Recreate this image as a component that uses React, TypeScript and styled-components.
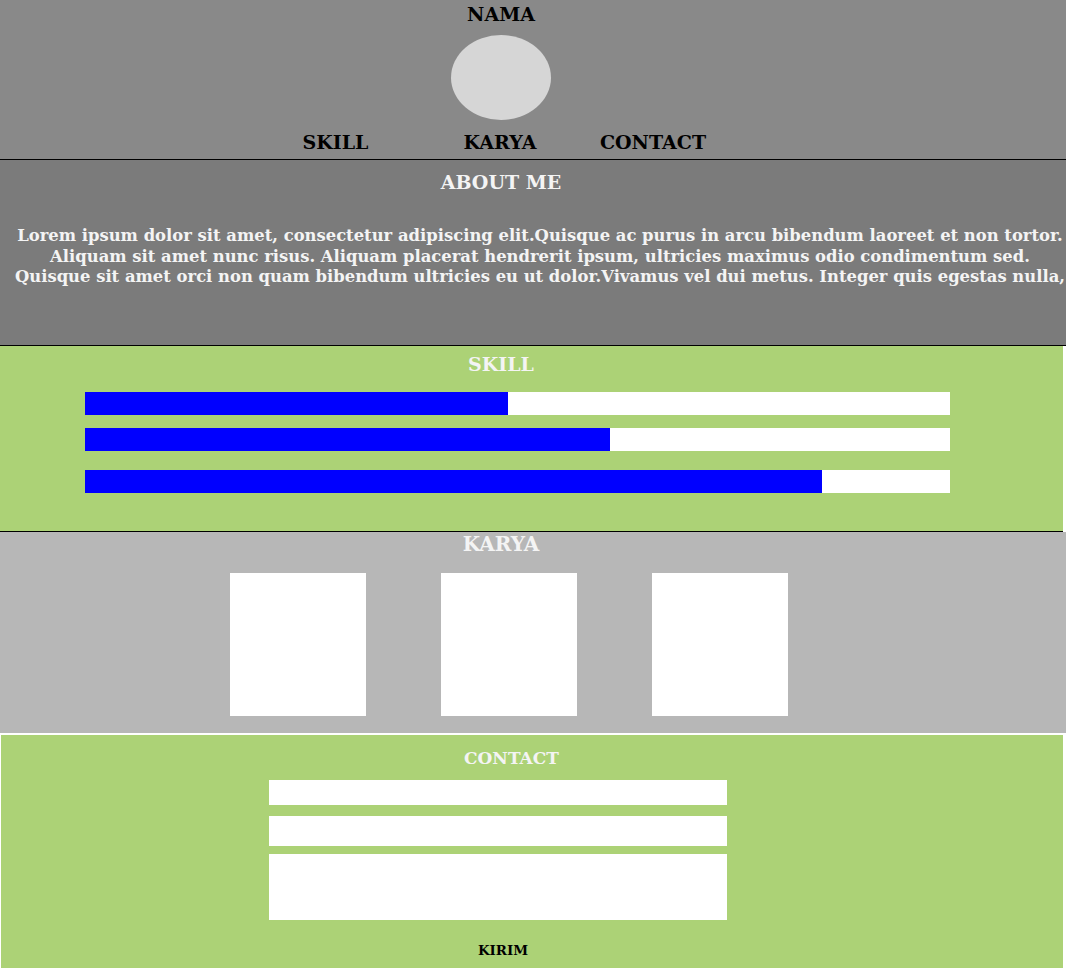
import React from "react";
import styled, { createGlobalStyle } from "styled-components";

const Global = createGlobalStyle`
  html, body { margin: 0; padding: 0; background: #ffffff; }
  body { font-family: "DejaVu Serif", "Liberation Serif", serif; font-weight: bold; }
  * { box-sizing: border-box; }
`;

const Page = styled.div`
  width: 1066px;
  display: flex;
  flex-direction: column;
`;

const Header = styled.header`
  height: 159px;
  background: #898989;
  border-bottom: 1px solid #000;
  display: flex;
  flex-direction: column;
  align-items: center;
  width: 1002px;
  box-sizing: content-box;
  padding-right: 64px;
`;

const Name = styled.h1`
  margin: 0;
  font-size: 19px;
  line-height: 28px;
  color: #000;
`;

const Avatar = styled.div`
  width: 100px;
  height: 85px;
  margin-top: 7px;
  border-radius: 50%;
  background: #d6d6d6;
`;

const Nav = styled.nav`
  align-self: stretch;
  margin-top: 10px;
  padding-left: 255px;
  display: grid;
  grid-template-columns: 161px 168px 138px;
`;

const NavLink = styled.a`
  text-align: center;
  font-size: 19px;
  line-height: 24px;
  color: #000;
  text-decoration: none;
  white-space: nowrap;
`;

const Section = styled.section<{ $bg: string; $h: number; $w?: number; $line?: boolean }>`
  background: ${(p) => p.$bg};
  height: ${(p) => p.$h}px;
  width: ${(p) => p.$w ?? 1066}px;
  border-bottom: ${(p) => (p.$line ? "1px solid #000" : "none")};
  box-sizing: content-box;
  overflow: hidden;
  display: flex;
  flex-direction: column;
`;

const Title = styled.h2<{ $w?: number; $top?: number; $size?: number }>`
  margin: 0;
  padding-top: ${(p) => p.$top ?? 0}px;
  width: ${(p) => p.$w ?? 1002}px;
  text-align: center;
  font-size: ${(p) => p.$size ?? 19}px;
  line-height: 24px;
  color: #f4f4f4;
`;

const About = styled.p`
  margin: 32px 0 0;
  padding-left: 14px;
  width: 1066px;
  text-align: center;
  font-size: 16.4px;
  line-height: 20.7px;
  color: #f4f4f4;
  white-space: nowrap;
`;

const Bars = styled.div`
  margin: 16px 0 0 85px;
  display: flex;
  flex-direction: column;
`;

const Track = styled.div<{ $gap: number }>`
  width: 865px;
  height: 23px;
  background: #ffffff;
  margin-bottom: ${(p) => p.$gap}px;
`;

const Fill = styled.div`
  height: 23px;
  background: #0000ff;
`;

const Works = styled.div`
  margin-top: 17px;
  padding-left: 230px;
  display: flex;
  gap: 75px;
`;

const Work = styled.div`
  width: 136px;
  height: 143px;
  background: #ffffff;
`;

const ContactWrap = styled.div`
  margin-top: 2px;
  padding-left: 1px;
`;

const Form = styled.form`
  margin-top: 10px;
  padding-left: 268px;
  display: flex;
  flex-direction: column;
  align-items: flex-start;
`;

const Field = styled.input<{ $h: number; $gap: number }>`
  width: 458px;
  height: ${(p) => p.$h}px;
  margin: 0 0 ${(p) => p.$gap}px;
  border: none;
  background: #fff;
  padding: 0 4px;
  outline: none;
`;

const Area = styled.textarea`
  width: 458px;
  height: 66px;
  margin: 0;
  border: none;
  background: #fff;
  resize: none;
  outline: none;
`;

const Send = styled.button`
  margin: 21px 0 0;
  width: 468px;
  padding: 0;
  border: none;
  background: none;
  font-family: "DejaVu Serif", "Liberation Serif", serif;
  font-weight: bold;
  font-size: 13.4px;
  line-height: 18px;
  color: #000;
  text-align: center;
`;

const skills = [
  { pct: 48.9, gap: 13 },
  { pct: 60.7, gap: 19 },
  { pct: 85.2, gap: 0 },
];

export default function App() {
  return (
    <Page>
      <Global />
      <Header>
        <Name>NAMA</Name>
        <Avatar />
        <Nav>
          <NavLink href="#skill">SKILL</NavLink>
          <NavLink href="#karya">KARYA</NavLink>
          <NavLink href="#contact">CONTACT</NavLink>
        </Nav>
      </Header>

      <Section $bg="#7b7b7b" $h={185} $line>
        <Title $top={10}>ABOUT ME</Title>
        <About>
          Lorem ipsum dolor sit amet, consectetur adipiscing elit.Quisque ac purus in arcu bibendum laoreet et non tortor.
          <br />
          Aliquam sit amet nunc risus. Aliquam placerat hendrerit ipsum, ultricies maximus odio condimentum sed.
          <br />
          Quisque sit amet orci non quam bibendum ultricies eu ut dolor.Vivamus vel dui metus. Integer quis egestas nulla,
        </About>
      </Section>

      <Section id="skill" $bg="#acd276" $h={185} $w={1063} $line>
        <Title $top={6}>SKILL</Title>
        <Bars>
          {skills.map((s, i) => (
            <Track key={i} $gap={s.gap}>
              <Fill style={{ width: `${s.pct}%` }} />
            </Track>
          ))}
        </Bars>
      </Section>

      <Section id="karya" $bg="#b7b7b7" $h={201}>
        <Title $size={20}>KARYA</Title>
        <Works>
          <Work />
          <Work />
          <Work />
        </Works>
      </Section>

      <ContactWrap>
        <Section id="contact" $bg="#acd276" $h={240} $w={1062}>
          <Title $top={11} $w={1021} $size={17}>CONTACT</Title>
          <Form onSubmit={(e) => e.preventDefault()}>
            <Field $h={25} $gap={11} />
            <Field $h={30} $gap={8} />
            <Area />
            <Send type="submit">KIRIM</Send>
          </Form>
        </Section>
      </ContactWrap>
    </Page>
  );
}
